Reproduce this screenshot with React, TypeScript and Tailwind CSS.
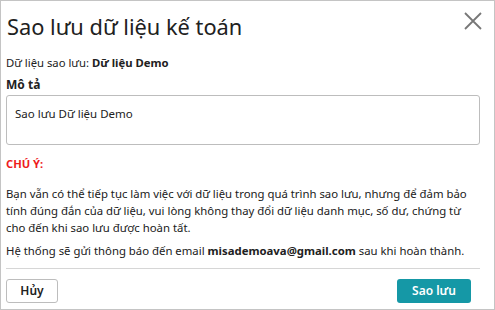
import React from "react";

const App = () => {
  return (
    <div
      className="w-[495px] h-[310px] bg-white border border-[#c4c4c4] flex flex-col text-[#212121]"
      style={{ fontFamily: '"Noto Sans", "Open Sans", sans-serif' }}
    >
      {/* header */}
      <div className="flex items-start justify-between pl-[6px] pr-[11px] pt-[10px]">
        <h1 className="text-[21.8px] leading-[32px] font-normal">Sao lưu dữ liệu kế toán</h1>
        <button className="text-[#777]">
          <svg width="20" height="20" viewBox="0 0 20 20" fill="none" stroke="currentColor" strokeWidth="1.8">
            <path d="M2 2L18 18M18 2L2 18" />
          </svg>
        </button>
      </div>

      <div className="flex flex-col px-[5px] pr-[14px]">
        <p className="mt-[12px] text-[11.3px] leading-[16px]">
          Dữ liệu sao lưu: <span className="font-bold">Dữ liệu Demo</span>
        </p>
        <label className="mt-[6px] text-[12px] leading-[16px] font-bold">Mô tả</label>
        <div className="mt-[2px] h-[50px] border border-[#bdbdbd] rounded-[3px] px-[8px] pt-[10px] text-[11.5px] leading-[16px]">
          Sao lưu Dữ liệu Demo
        </div>
        <p className="mt-[11px] text-[11.2px] leading-[16px] font-bold text-[#ee1c1c]">CHÚ Ý:</p>
        <p className="mt-[13px] max-w-[468px] text-[11.35px] leading-[17px]">
          Bạn vẫn có thể tiếp tục làm việc với dữ liệu trong quá trình sao lưu, nhưng để đảm bảo tính đúng đắn của
          dữ liệu, vui lòng không thay đổi dữ liệu danh mục, số dư, chứng từ cho đến khi sao lưu được hoàn tất.
        </p>
        <p className="mt-[6px] text-[11.35px] leading-[17px]">
          Hệ thống sẽ gửi thông báo đến email <span className="font-bold">misademoava@gmail.com</span> sau khi hoàn
          thành.
        </p>
      </div>

      <div className="mx-[5px] mr-[14px] mt-[9px] border-t border-[#d6d6d6]" />

      <div className="flex items-center justify-between pl-[5px] pr-[23px] pt-[10px]">
        <button className="w-[52px] h-[24px] border border-[#bdbdbd] rounded-[3px] text-[12px] font-semibold">
          Hủy
        </button>
        <button className="w-[74px] h-[24px] rounded-[3px] bg-[#1598a6] text-white text-[12px] font-semibold">
          Sao lưu
        </button>
      </div>
    </div>
  );
};

export default App;
